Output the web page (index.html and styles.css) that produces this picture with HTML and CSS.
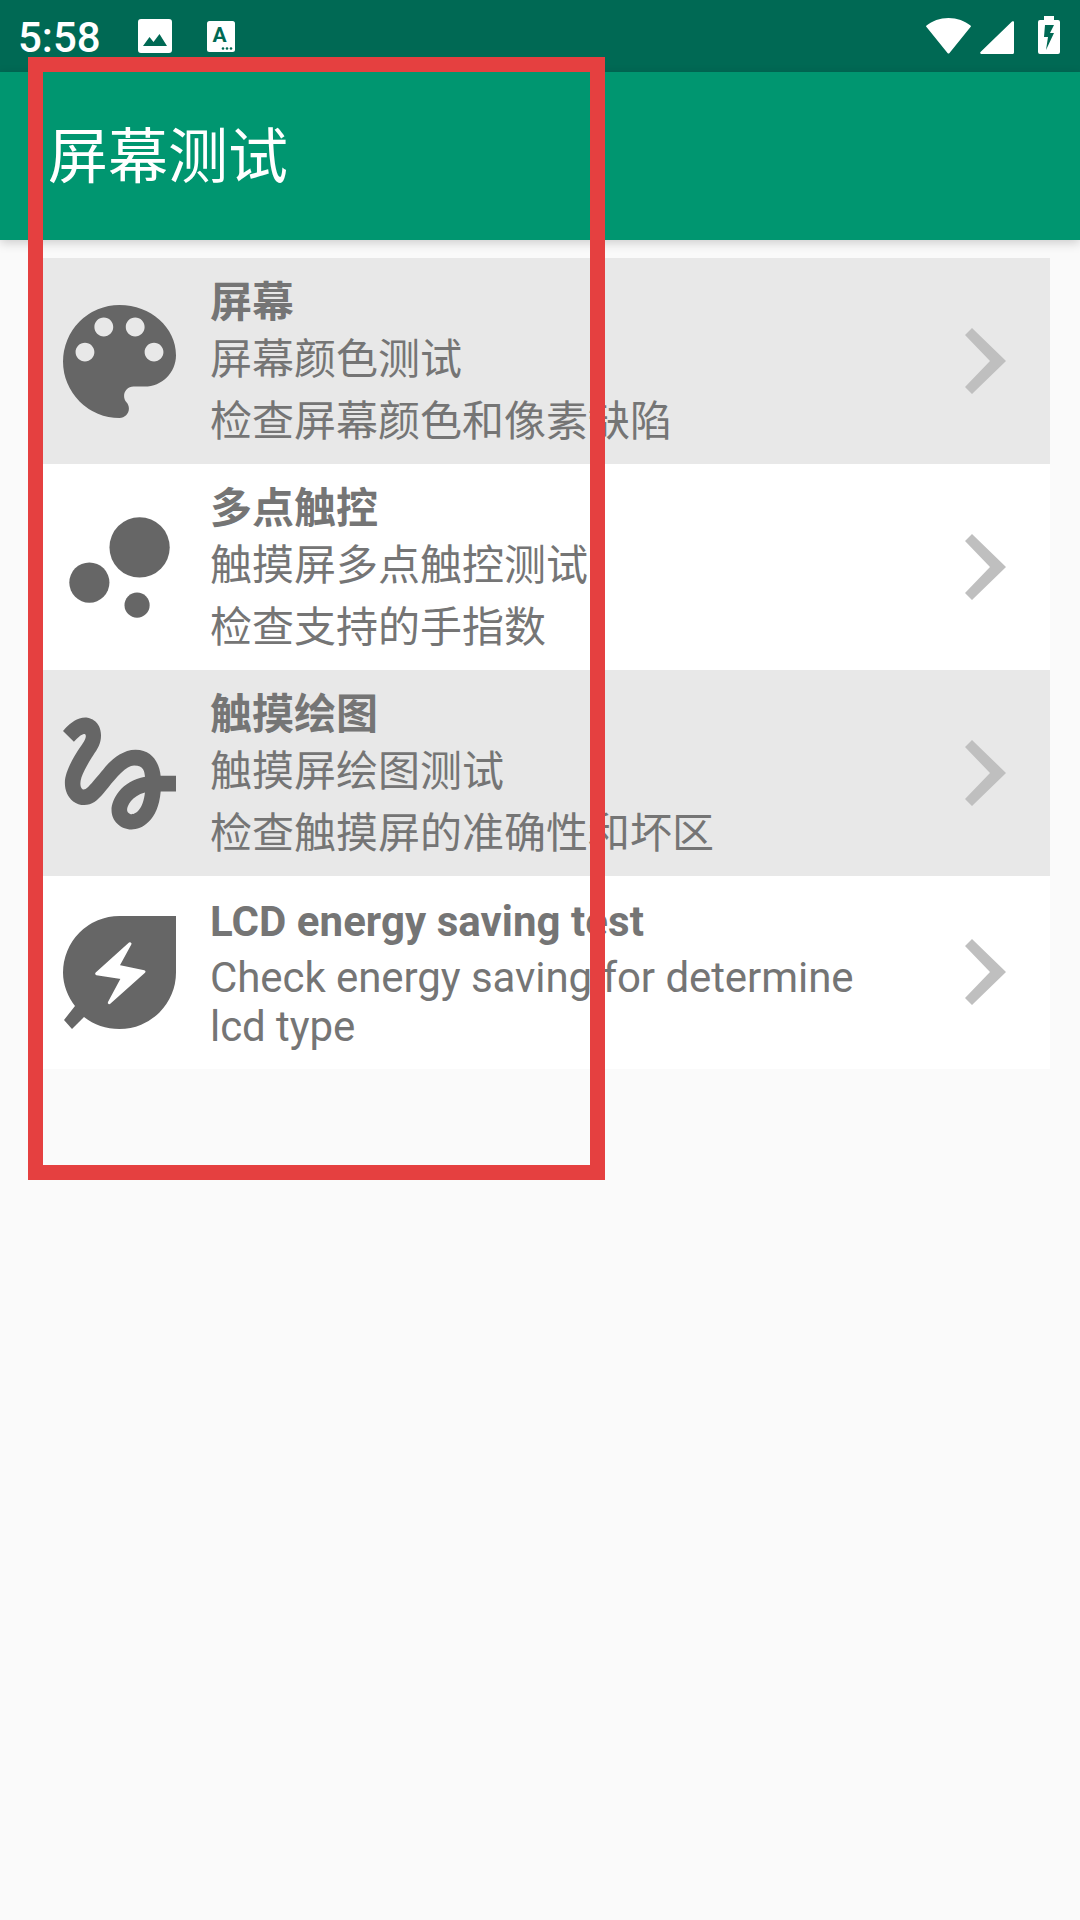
FILE: index.html
```html
<!DOCTYPE html>
<html lang="zh-CN">
<head>
    <meta charset="UTF-8">
    <meta name="viewport" content="width=device-width, initial-scale=1.0">
    <title>屏幕测试</title>
    <link rel="stylesheet" href="styles.css">
</head>
<body>
  <div class="status-bar">
    <span class="clock">5:58</span>
    <svg class="icon-image" viewBox="0 0 34 34">
      <path fill="#fff" fill-rule="evenodd" d="M3 0H31a3 3 0 0 1 3 3V31a3 3 0 0 1-3 3H3a3 3 0 0 1-3-3V3a3 3 0 0 1 3-3zM5 27H29L21.500 15 15.500 23 11.500 18z"/>
    </svg>
    <svg class="icon-keyboard" viewBox="0 0 28 31">
      <rect width="28" height="31" rx="2.500" fill="#fff"/>
      <text class="icon-letter" x="12.500" y="21" text-anchor="middle">A</text>
      <circle cx="16" cy="27.500" r="1.300" fill="#006954"/>
      <circle cx="20" cy="27.500" r="1.300" fill="#006954"/>
      <circle cx="24" cy="27.500" r="1.300" fill="#006954"/>
    </svg>
    <div class="status-right">
      <svg class="icon-wifi" viewBox="0 0 45 36">
        <path fill="#fff" d="M0.500 7.500C6 3 14 0 22.500 0S39 3 44.500 7.500a1 1 0 0 1 0 1.500L23.500 35a1.300 1.300 0 0 1-2 0L0.500 9a1 1 0 0 1 0-1.500z"/>
      </svg>
      <svg class="icon-signal" viewBox="0 0 34 33">
        <path fill="#fff" d="M32 0.500a1.200 1.200 0 0 1 2 1V31.500a1.500 1.500 0 0 1-1.500 1.500H1.500a1.200 1.200 0 0 1-1-2z"/>
      </svg>
      <svg class="icon-battery" viewBox="0 0 22 38">
        <path fill="#fff" fill-rule="evenodd" d="M6 0H16V4H20a2 2 0 0 1 2 2V36a2 2 0 0 1-2 2H2a2 2 0 0 1-2-2V6a2 2 0 0 1 2-2H6zM7 9 6 21H10L8 34 16 17H12L16 9z"/>
      </svg>
    </div>
  </div>

  <div class="app-bar">屏幕测试</div>

  <div class="list">
    <div class="row row-shaded">
      <svg class="row-icon" viewBox="3 3 18 18">
        <path d="M12 3a9 9 0 0 0 0 18c.83 0 1.500-.67 1.500-1.500 0-.39-.15-.74-.39-1.010-.23-.26-.38-.61-.38-.99 0-.83.67-1.500 1.500-1.500H16c2.760 0 5-2.240 5-5 0-4.420-4.030-8-9-8zm-5.500 9c-.83 0-1.500-.67-1.500-1.500S5.670 9 6.500 9 8 9.670 8 10.500 7.330 12 6.500 12zm3-4C8.670 8 8 7.330 8 6.500S8.670 5 9.500 5s1.500.67 1.500 1.500S10.330 8 9.500 8zm5 0c-.83 0-1.500-.67-1.500-1.500S13.670 5 14.500 5s1.500.67 1.500 1.500S15.330 8 14.500 8zm3 4c-.83 0-1.500-.67-1.500-1.500S16.670 9 17.500 9s1.500.67 1.500 1.500-.67 1.500-1.500 1.500z"/>
      </svg>
      <div class="row-text">
        <div class="row-title">屏幕</div>
        <div>屏幕颜色测试</div>
        <div>检查屏幕颜色和像素缺陷</div>
      </div>
      <svg class="chevron" viewBox="0 0 41 66"><path d="M7 0 41 33 7 66 0 59 25 33 0 7z"/></svg>
    </div>

    <div class="row">
      <svg class="row-icon" viewBox="3 3 18 18">
        <circle cx="7.200" cy="14.400" r="3.200"/>
        <circle cx="14.800" cy="18" r="2"/>
        <circle cx="15.200" cy="8.800" r="4.800"/>
      </svg>
      <div class="row-text">
        <div class="row-title">多点触控</div>
        <div>触摸屏多点触控测试</div>
        <div>检查支持的手指数</div>
      </div>
      <svg class="chevron" viewBox="0 0 41 66"><path d="M7 0 41 33 7 66 0 59 25 33 0 7z"/></svg>
    </div>

    <div class="row row-shaded">
      <svg class="row-icon" viewBox="2.840 3 18.160 18">
        <path d="M4.590 6.890c.7-.71 1.400-1.350 1.710-1.220.5.2 0 1.030-.3 1.520-.25.42-2.860 3.890-2.860 6.310 0 1.280.48 2.340 1.340 2.980.75.56 1.740.73 2.640.46 1.070-.31 1.950-1.400 3.060-2.770 1.210-1.490 2.830-3.440 4.080-3.440 1.630 0 1.650 1.010 1.760 1.790-3.780.64-5.380 3.670-5.380 5.370 0 1.700 1.440 3.090 3.210 3.090 1.630 0 4.290-1.330 4.690-6.100H21v-2.500h-2.470c-.15-1.650-1.090-4.200-4.030-4.200-2.250 0-4.180 1.910-4.940 2.840-.58.73-2.060 2.480-2.290 2.720-.25.3-.68.84-1.110.84-.45 0-.72-.83-.36-1.920.35-1.090 1.400-2.860 1.850-3.520.78-1.140 1.300-1.920 1.300-3.280C8.950 3.690 7.310 3 6.440 3 5.120 3 3.970 4 3.720 4.250c-.36.36-.66.66-.88.93l1.750 1.710zm9.290 11.660c-.31 0-.74-.26-.74-.72 0-.6.73-2.200 2.870-2.760-.3 2.690-1.430 3.480-2.130 3.480z"/>
      </svg>
      <div class="row-text">
        <div class="row-title">触摸绘图</div>
        <div>触摸屏绘图测试</div>
        <div>检查触摸屏的准确性和坏区</div>
      </div>
      <svg class="chevron" viewBox="0 0 41 66"><path d="M7 0 41 33 7 66 0 59 25 33 0 7z"/></svg>
    </div>

    <div class="row row-latin">
      <svg class="row-icon" viewBox="0 0 113 113">
        <path d="M113 0H56.500A56.500 56.500 0 0 0 0 56.500C0 69 5 81 12 90L1 104 9 113 21 101C31 109 43 113 56.500 113A56.500 56.500 0 0 0 113 56.500z"/>
        <path class="bolt" d="M67 27.700 33.700 57.700 59.700 61.700 46.300 86.700 81 55.700 54.700 50.300z"/>
      </svg>
      <div class="row-text">
        <div class="row-title">LCD energy saving test</div>
        <div>Check energy saving for determine<br>lcd type</div>
      </div>
      <svg class="chevron" viewBox="0 0 41 66"><path d="M7 0 41 33 7 66 0 59 25 33 0 7z"/></svg>
    </div>
  </div>

  <div class="highlight"></div>
</body>
</html>
```

FILE: styles.css
```css
body {
    font-family: Roboto, "Noto Sans CJK SC", sans-serif;
    background-color: #fafafa;
    margin: 0;
    padding: 0;
    color: #757575;
    height: 1920px;
    overflow: hidden;
    position: relative;
}
.status-bar {
    height: 72px;
    background-color: #006954;
    display: flex;
    align-items: center;
    padding: 0 20px 0 18px;
    box-sizing: border-box;
    color: white;
}
.clock {
    font-size: 42px;
    font-weight: 500;
    line-height: 72px;
    padding-top: 4px;
    width: 120px;
}
.icon-image {
    width: 34px;
    height: 34px;
}
.icon-keyboard {
    width: 28px;
    height: 31px;
    margin-left: 35px;
}
.icon-letter {
    font-family: Roboto, sans-serif;
    font-size: 21px;
    font-weight: 700;
    fill: #006954;
}
.status-right {
    margin-left: auto;
    display: flex;
    align-items: flex-end;
    height: 38px;
    margin-bottom: 2px;
}
.icon-wifi {
    width: 45px;
    height: 36px;
}
.icon-signal {
    width: 34px;
    height: 33px;
    margin-left: 9px;
}
.icon-battery {
    width: 22px;
    height: 38px;
    margin-left: 24px;
}
.app-bar {
    height: 168px;
    background-color: #009670;
    color: white;
    font-size: 60px;
    line-height: 171px;
    padding-left: 48px;
    box-shadow: 0 3px 10px rgba(0,0,0,0.18);
    position: relative;
}
.list {
    margin: 18px 30px 0;
}
.row {
    display: flex;
    align-items: center;
    height: 206px;
    background-color: white;
    font-size: 42px;
    line-height: 62px;
}
.row-shaded {
    background-color: #e8e8e8;
}
.row-latin {
    height: 193px;
    line-height: 49px;
    letter-spacing: -0.07px;
}
.row-icon {
    width: 113px;
    height: 113px;
    margin-left: 33px;
    flex-shrink: 0;
    fill: #666;
}
.bolt {
    fill: white;
    stroke: white;
    stroke-width: 3px;
    stroke-linejoin: round;
}
.row-text {
    margin-left: 34px;
    padding-top: 2px;
    flex: 1;
}
.row-title {
    font-weight: 700;
    line-height: 61px;
    margin-bottom: -4px;
}
.row-latin .row-title {
    line-height: 49px;
    margin-bottom: 7px;
    letter-spacing: 0.05px;
}
.chevron {
    width: 41px;
    height: 66px;
    margin-right: 44px;
    flex-shrink: 0;
    fill: #bfbfbf;
}
.row-latin .chevron {
    margin-bottom: 2px;
}
.highlight {
    position: absolute;
    left: 28px;
    top: 57px;
    width: 547px;
    height: 1093px;
    border: 15px solid #e54040;
}
```
